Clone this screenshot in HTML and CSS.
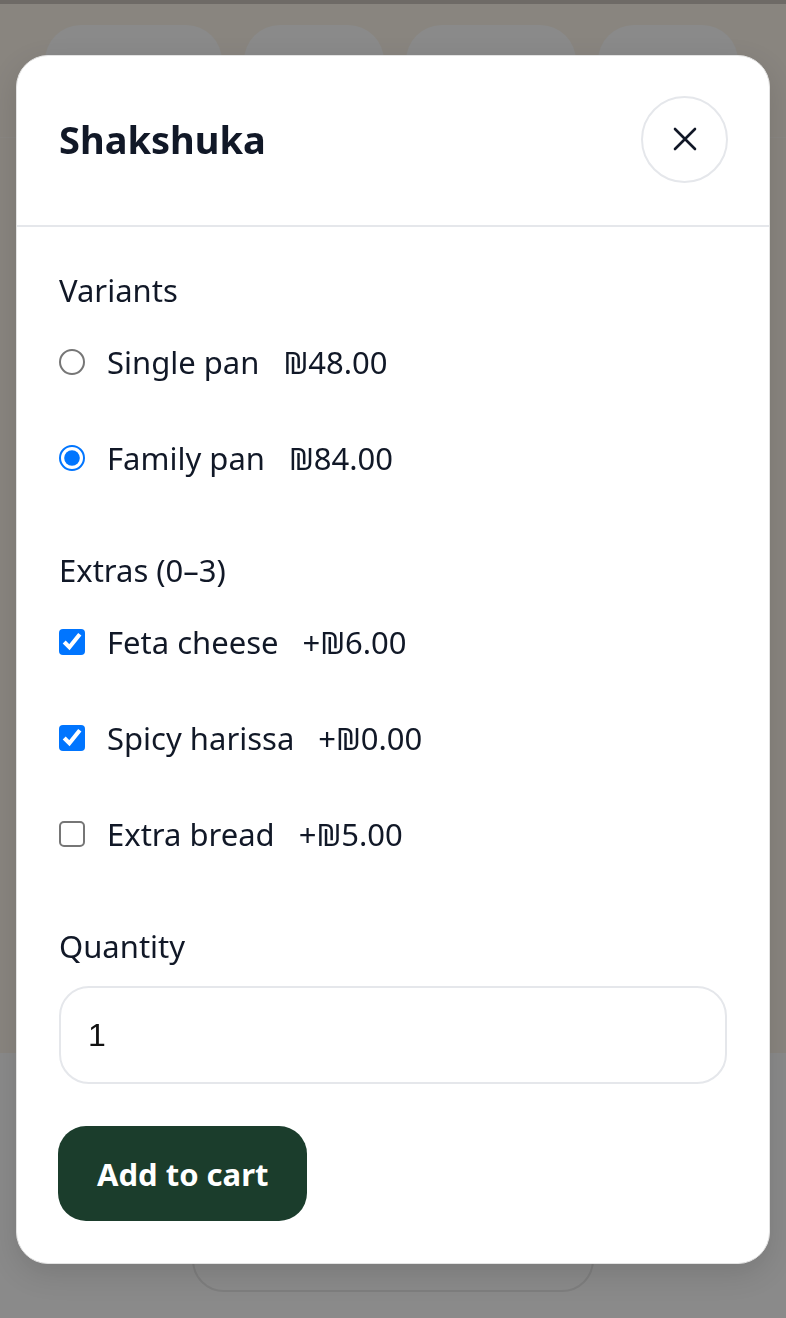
FILE: index.html
```html
<!DOCTYPE html>
<html lang="en">
<head>
    <meta charset="UTF-8">
    <meta name="viewport" content="width=device-width, initial-scale=1.0">
    <title>Shakshuka - Menu</title>
    <link rel="stylesheet" href="styles.css">
</head>
<body>
    <div class="page">
        <div class="top-strip"></div>
        <header class="site-header">
            <nav class="chips">
                <span class="chip chip-1"></span>
                <span class="chip chip-2"></span>
                <span class="chip chip-3"></span>
                <span class="chip chip-4"></span>
            </nav>
        </header>
        <main class="menu"></main>
        <footer class="cart-bar">
            <span class="cart-btn"></span>
        </footer>
    </div>

    <div class="backdrop"></div>

    <div class="modal" role="dialog" aria-labelledby="modal-title">
        <div class="modal-head">
            <h2 id="modal-title">Shakshuka</h2>
            <button class="close" aria-label="Close">
                <svg width="24" height="24" viewBox="0 0 24 24" fill="none" stroke="#111827" stroke-width="2.6" stroke-linecap="round">
                    <path d="M2 2 L22 22 M22 2 L2 22"/>
                </svg>
            </button>
        </div>

        <form class="modal-body" onsubmit="return false">
            <div class="group">
                <div class="group-title">Variants</div>
                <label class="option">
                    <input type="radio" name="variant">
                    <span class="name">Single pan</span>
                    <span class="price">₪48.00</span>
                </label>
                <label class="option">
                    <input type="radio" name="variant" checked>
                    <span class="name">Family pan</span>
                    <span class="price">₪84.00</span>
                </label>
            </div>

            <div class="group">
                <div class="group-title">Extras (0–3)</div>
                <label class="option">
                    <input type="checkbox" checked>
                    <span class="name">Feta cheese</span>
                    <span class="price">+₪6.00</span>
                </label>
                <label class="option">
                    <input type="checkbox" checked>
                    <span class="name">Spicy harissa</span>
                    <span class="price">+₪0.00</span>
                </label>
                <label class="option">
                    <input type="checkbox">
                    <span class="name">Extra bread</span>
                    <span class="price">+₪5.00</span>
                </label>
            </div>

            <label class="group-title" for="qty">Quantity</label>
            <input id="qty" class="qty" type="number" min="1" value="1">

            <button class="add" type="submit">Add to cart</button>
        </form>
    </div>
</body>
</html>
```

FILE: styles.css
```css
* {
    box-sizing: border-box;
}
body {
    margin: 0;
    font-family: "Noto Sans", sans-serif;
    color: #111827;
    background-color: #fdf6eb;
}

/* page behind the dialog */
.page {
    height: 100vh;
    display: flex;
    flex-direction: column;
}
.top-strip {
    height: 4px;
    background-color: #ccc4bd;
}
.site-header {
    height: 134px;
    border-bottom: 1px solid #fffaf3;
    padding: 21px 45px 0;
}
.chips {
    display: flex;
    gap: 22px;
}
.chip {
    height: 72px;
    border-radius: 36px;
    background-color: #fff;
}
.chip-1 { width: 177px; }
.chip-2 { width: 140px; }
.chip-3 { width: 170px; }
.chip-4 { width: 140px; }
.menu {
    flex: 1;
}
.cart-bar {
    height: 265px;
    background-color: #fff;
    display: flex;
    justify-content: center;
    align-items: flex-end;
    padding-bottom: 26px;
}
.cart-btn {
    width: 402px;
    height: 84px;
    border: 2px solid #e9e9e9;
    border-radius: 32px;
}
.backdrop {
    position: fixed;
    inset: 0;
    background-color: rgba(0, 0, 0, 0.46);
}

/* dialog */
.modal {
    position: absolute;
    top: 55px;
    left: 16px;
    width: 754px;
    background-color: #fff;
    border: 1px solid #e3e3e3;
    border-radius: 32px;
    box-shadow: 0 10px 30px rgba(0, 0, 0, 0.12);
    overflow: hidden;
}
.modal-head {
    height: 171px;
    display: flex;
    align-items: center;
    justify-content: space-between;
    padding: 0 41px 3px 42px;
    border-bottom: 2px solid #e5e7eb;
}
.modal-head h2 {
    margin: 0;
    font-size: 38px;
    font-weight: 700;
    color: #111827;
}
.close {
    width: 87px;
    height: 87px;
    border-radius: 50%;
    border: 2px solid #e5e7eb;
    background-color: #fff;
    display: flex;
    align-items: center;
    justify-content: center;
    cursor: pointer;
    padding: 0;
}
.modal-body {
    padding: 39px 41px 42px 42px;
    display: flex;
    flex-direction: column;
    align-items: flex-start;
}
.group {
    margin-bottom: 40px;
}
.group-title {
    display: block;
    font-size: 31px;
    line-height: 48px;
}
.option {
    height: 96px;
    display: flex;
    align-items: center;
    font-size: 31px;
    cursor: pointer;
}
.option input {
    zoom: 2;
    margin: 0 11px 0 0;
    accent-color: #0075ff;
}
.option .price {
    margin-left: 24px;
}
.qty {
    margin-top: 16px;
    width: 668px;
    height: 98px;
    border: 2px solid #e5e7eb;
    border-radius: 30px;
    padding: 0 27px;
    font-family: "Liberation Sans", Arial, sans-serif;
    font-size: 32px;
    color: #111;
    outline: none;
}
.add {
    margin-top: 42px;
    margin-left: -1px;
    height: 95px;
    padding: 0 39px;
    border: none;
    border-radius: 28px;
    background-color: #1b3d2c;
    color: #fff;
    font-family: "Noto Sans", sans-serif;
    font-size: 31px;
    font-weight: 700;
    cursor: pointer;
}
```
